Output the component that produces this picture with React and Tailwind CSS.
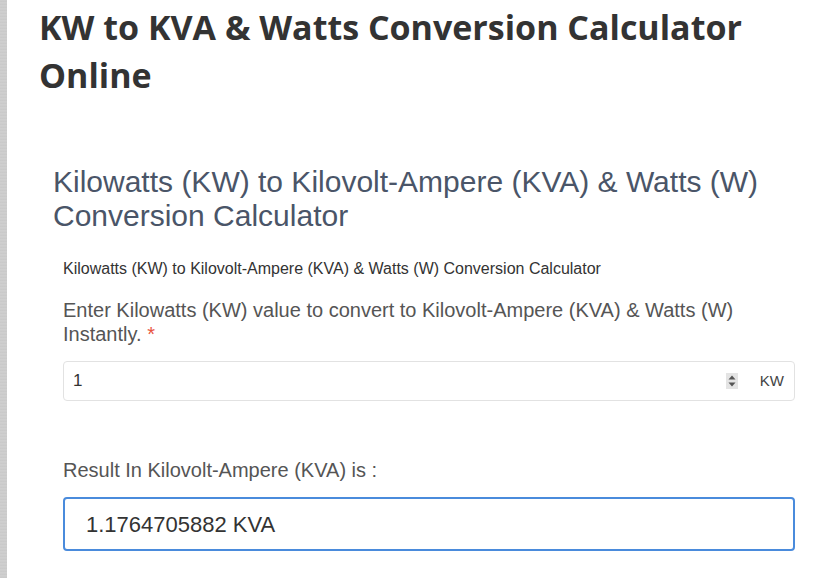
import React from "react";

function Spinner() {
  return (
    <svg width="12" height="16" viewBox="0 0 12 16" className="shrink-0">
      <rect x="0" y="0" width="12" height="16" fill="#e4e4e4" />
      <polygon points="2.5,6.5 9.5,6.5 6,2.5" fill="#555" />
      <polygon points="2.5,9.5 9.5,9.5 6,13.5" fill="#555" />
    </svg>
  );
}

export default function App() {
  return (
    <div className="flex min-h-[578px] w-[815px] bg-white overflow-hidden">
      <div className="w-[7px] shrink-0 bg-[#c8c8c8] bg-[repeating-linear-gradient(0deg,#bdbdbd_0px,#d6d6d6_1px,#c4c4c4_2px,#dadada_3px)]" />
      <div className="flex-1 pl-[32px] pr-[20px] pt-[3px]">
        <h1
          className="text-[34px] leading-[48px] font-bold text-[#333333] whitespace-nowrap"
          style={{ fontFamily: '"Open Sans", sans-serif' }}
        >
          KW to KVA &amp; Watts Conversion Calculator
          <br />
          Online
        </h1>
        <div className="pl-[14px] mt-[66px]" style={{ fontFamily: '"Liberation Sans", Arial, sans-serif' }}>
          <h2 className="text-[30px] leading-[34px] text-[#4a5568] font-normal whitespace-nowrap">
            Kilowatts (KW) to Kilovolt-Ampere (KVA) &amp; Watts (W)
            <br />
            Conversion Calculator
          </h2>
          <div className="pl-[10px]">
            <p className="mt-[26px] text-[16px] leading-[20px] text-[#333333] whitespace-nowrap">
              Kilowatts (KW) to Kilovolt-Ampere (KVA) &amp; Watts (W) Conversion Calculator
            </p>
            <p className="mt-[19px] text-[20px] leading-[24px] text-[#555555] whitespace-nowrap">
              Enter Kilowatts (KW) value to convert to Kilovolt-Ampere (KVA) &amp; Watts (W)
              <br />
              Instantly. <span className="text-[#e8543f]">*</span>
            </p>
            <div className="mt-[15px] h-[40px] w-[732px] flex items-center border border-[#e2e2e2] rounded-[4px] pl-[9px] pr-[10px]">
              <span className="flex-1 text-[17px] text-[#333333]">1</span>
              <Spinner />
              <span className="ml-[22px] text-[15px] text-[#444444]">KW</span>
            </div>
            <p className="mt-[57px] text-[20px] leading-[24px] text-[#555555] whitespace-nowrap">
              Result In Kilovolt-Ampere (KVA) is :
            </p>
            <div className="mt-[15px] h-[54px] w-[732px] flex items-center border-2 border-[#4a8bdc] rounded-[4px] pl-[21px]">
              <span className="text-[22px] text-[#333333]">1.1764705882 KVA</span>
            </div>
          </div>
        </div>
      </div>
    </div>
  );
}
